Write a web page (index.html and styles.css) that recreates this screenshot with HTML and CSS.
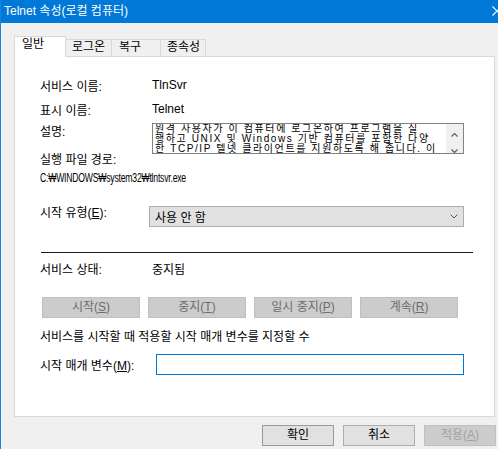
FILE: index.html
```html
<!DOCTYPE html>
<html lang="ko">
<head>
<meta charset="utf-8">
<title>Telnet 속성(로컬 컴퓨터)</title>
<link rel="stylesheet" href="styles.css">
</head>
<body>
<div class="window">
  <div class="titlebar">
    <span class="title">Telnet 속성(로컬 컴퓨터)</span>
    <svg class="close" width="10" height="10" viewBox="0 0 10 10"><path d="M0.5 0.5 L9.5 9.5 M9.5 0.5 L0.5 9.5" stroke="#ffffff" stroke-width="1.1" fill="none"/></svg>
  </div>
  <div class="client">
    <div class="tabs">
      <div class="tab active">일반</div>
      <div class="tab t-logon">로그온</div>
      <div class="tab t-recovery">복구</div>
      <div class="tab t-deps">종속성</div>
    </div>
    <div class="panel">
      <div class="row">
        <div class="label">서비스 이름:</div>
        <div class="value">TlnSvr</div>
      </div>
      <div class="row gap4">
        <div class="label">표시 이름:</div>
        <div class="value">Telnet</div>
      </div>
      <div class="row desc-row gap4">
        <div class="label desc-label">설명:</div>
        <div class="descbox">
          <div class="desc-text">
            <div class="dline">원격 사용자가 이 컴퓨터에 로그온하여 프로그램을 실</div>
            <div class="dline">행하고 UNIX 및 Windows 기반 컴퓨터를 포함한 다양</div>
            <div class="dline">한 TCP/IP 텔넷 클라이언트를 지원하도록 해 줍니다. 이</div>
          </div>
          <div class="scrollbar">
            <svg width="17" height="29" viewBox="0 0 17 29"><path d="M5.5 12.5 L8.5 9.5 L11.5 12.5 M5.5 25.5 L8.5 28.5 L11.5 25.5" stroke="#606060" stroke-width="1.2" fill="none"/></svg>
          </div>
        </div>
      </div>
      <div class="line-row">실행 파일 경로:</div>
      <div class="line-row path-row"><span class="path">C:₩WINDOWS₩system32₩tlntsvr.exe</span></div>
      <div class="row combo-row">
        <div class="label combo-label">시작 유형(<u>E</u>):</div>
        <div class="combo">
          <span>사용 안 함</span>
          <svg width="8" height="5" viewBox="0 0 8 5"><path d="M0.5 0.5 L4 4 L7.5 0.5" stroke="#555" stroke-width="1" fill="none"/></svg>
        </div>
      </div>
      <div class="sep"></div>
      <div class="line-row status-row">
        <div class="label">서비스 상태:</div>
        <div class="value">중지됨</div>
      </div>
      <div class="svc-buttons">
        <button class="btn dis" disabled>시작(<u>S</u>)</button>
        <button class="btn dis" disabled>중지(<u>T</u>)</button>
        <button class="btn dis" disabled>일시 중지(<u>P</u>)</button>
        <button class="btn dis" disabled>계속(<u>R</u>)</button>
      </div>
      <div class="line-row hint-row">서비스를 시작할 때 적용할 시작 매개 변수를 지정할 수</div>
      <div class="row param-row">
        <div class="param-label">시작 매개 변수(<u>M</u>):</div>
        <div class="param-input"></div>
      </div>
    </div>
    <div class="footer">
      <button class="btn fbtn ok">확인</button>
      <button class="btn fbtn">취소</button>
      <button class="btn fbtn dis2" disabled>적용(<u>A</u>)</button>
    </div>
  </div>
</div>
</body>
</html>
```
FILE: styles.css
```css
html, body {
  margin: 0;
  padding: 0;
}
body {
  width: 498px;
  height: 449px;
  overflow: hidden;
  background: #f0f0f0;
  font-family: "Liberation Sans", "Noto Sans CJK KR", sans-serif;
  font-size: 12px;
  color: #000;
}
.window {
  height: 449px;
  box-sizing: border-box;
  border-left: 1px solid #1883d7;
}
.titlebar {
  height: 23px;
  background: #0078d7;
  color: #fff;
  display: flex;
  justify-content: space-between;
  align-items: flex-start;
  padding-left: 3px;
  overflow: hidden;
}
.title {
  line-height: 23px;
  font-size: 12px;
}
.close {
  margin-top: 6px;
  margin-right: -4px;
  flex: none;
}
.client {
  padding: 13px 0 0 13px;
}
.tabs {
  display: flex;
  align-items: flex-end;
  height: 20px;
  position: relative;
  z-index: 1;
}
.tab {
  box-sizing: border-box;
  height: 17px;
  border: 1px solid #d9d9d9;
  border-bottom: none;
  background: #f0f0f0;
  line-height: 15px;
  padding-left: 6px;
  margin-left: -1px;
  white-space: nowrap;
}
.tab.active {
  width: 52px;
  height: 21px;
  margin-left: 0;
  margin-bottom: -1px;
  background: #fff;
  padding-left: 7px;
  line-height: 15px;
  position: relative;
  z-index: 2;
}
.t-logon { width: 47px; }
.t-recovery { width: 50px; padding-left: 7px; }
.t-deps { width: 46px; }
.panel {
  box-sizing: border-box;
  width: 481px;
  height: 361px;
  background: #fff;
  border: 1px solid #d9d9d9;
  padding: 18px 0 0 25px;
}
.row {
  display: flex;
  align-items: center;
  height: 20px;
}
.gap4 { margin-top: 4px; }
.label {
  width: 112px;
  flex: none;
  white-space: nowrap;
}
.value { white-space: nowrap; }
.desc-row {
  align-items: flex-start;
  height: 31px;
}
.desc-label { line-height: 18px; }
.descbox {
  box-sizing: border-box;
  width: 312px;
  height: 31px;
  border: 1px solid #828282;
  display: flex;
  overflow: hidden;
}
.desc-text {
  flex: 1;
  padding: 0 0 0 2px;
  overflow: hidden;
  font-size: 10px;
  letter-spacing: 1.6px;
}
.dline {
  line-height: 10px;
  height: 10px;
  white-space: nowrap;
}
.scrollbar {
  width: 17px;
  flex: none;
  background: #f0f0f0;
  height: 29px;
}
.scrollbar svg { display: block; }
.line-row {
  height: 12px;
  line-height: 12px;
  white-space: nowrap;
}
.path-row { margin-top: 6px; }
.path {
  display: inline-block;
  font-size: 12px;
  letter-spacing: -0.3px;
  transform: scaleX(0.72);
  transform-origin: left center;
}
.combo-row {
  margin-top: 22px;
  height: 21px;
  align-items: flex-start;
}
.combo-label { line-height: 14px; }
.combo {
  box-sizing: border-box;
  width: 315px;
  height: 21px;
  margin-left: -3px;
  background: #e1e1e1;
  border: 1px solid #adadad;
  display: flex;
  align-items: center;
  justify-content: space-between;
  padding: 0 5px 0 5px;
}
.sep {
  height: 1px;
  width: 432px;
  background: #1a1a1a;
  margin: 25px 0 0 1px;
}
.status-row {
  display: flex;
  margin-top: 10px;
  height: 14px;
  line-height: 14px;
}
.svc-buttons {
  display: flex;
  gap: 8px;
  margin: 20px 0 0 2px;
}
.btn {
  box-sizing: border-box;
  height: 21px;
  border: 1px solid #adadad;
  background: #e1e1e1;
  font: inherit;
  color: #000;
  line-height: 19px;
  text-align: center;
  padding: 0;
  margin: 0;
}
.svc-buttons .btn { width: 98px; }
.btn.dis {
  background: #cccccc;
  border-color: #bfbfbf;
  color: #6d6d6d;
}
.hint-row {
  margin-top: 12px;
  height: 14px;
  line-height: 14px;
}
.param-row {
  margin-top: 10px;
  height: 21px;
}
.param-label {
  width: 116px;
  flex: none;
  white-space: nowrap;
}
.param-input {
  box-sizing: border-box;
  width: 308px;
  height: 21px;
  border: 1px solid #0078d7;
  background: #fff;
}
.footer {
  display: flex;
  gap: 9px;
  margin-top: 8px;
  padding-left: 248px;
}
.fbtn { width: 72px; }
.btn.ok { border-color: #9a9a9a; }
.btn.dis2 {
  background: #cccccc;
  border-color: #bfbfbf;
  color: #a3a3a3;
}
```
